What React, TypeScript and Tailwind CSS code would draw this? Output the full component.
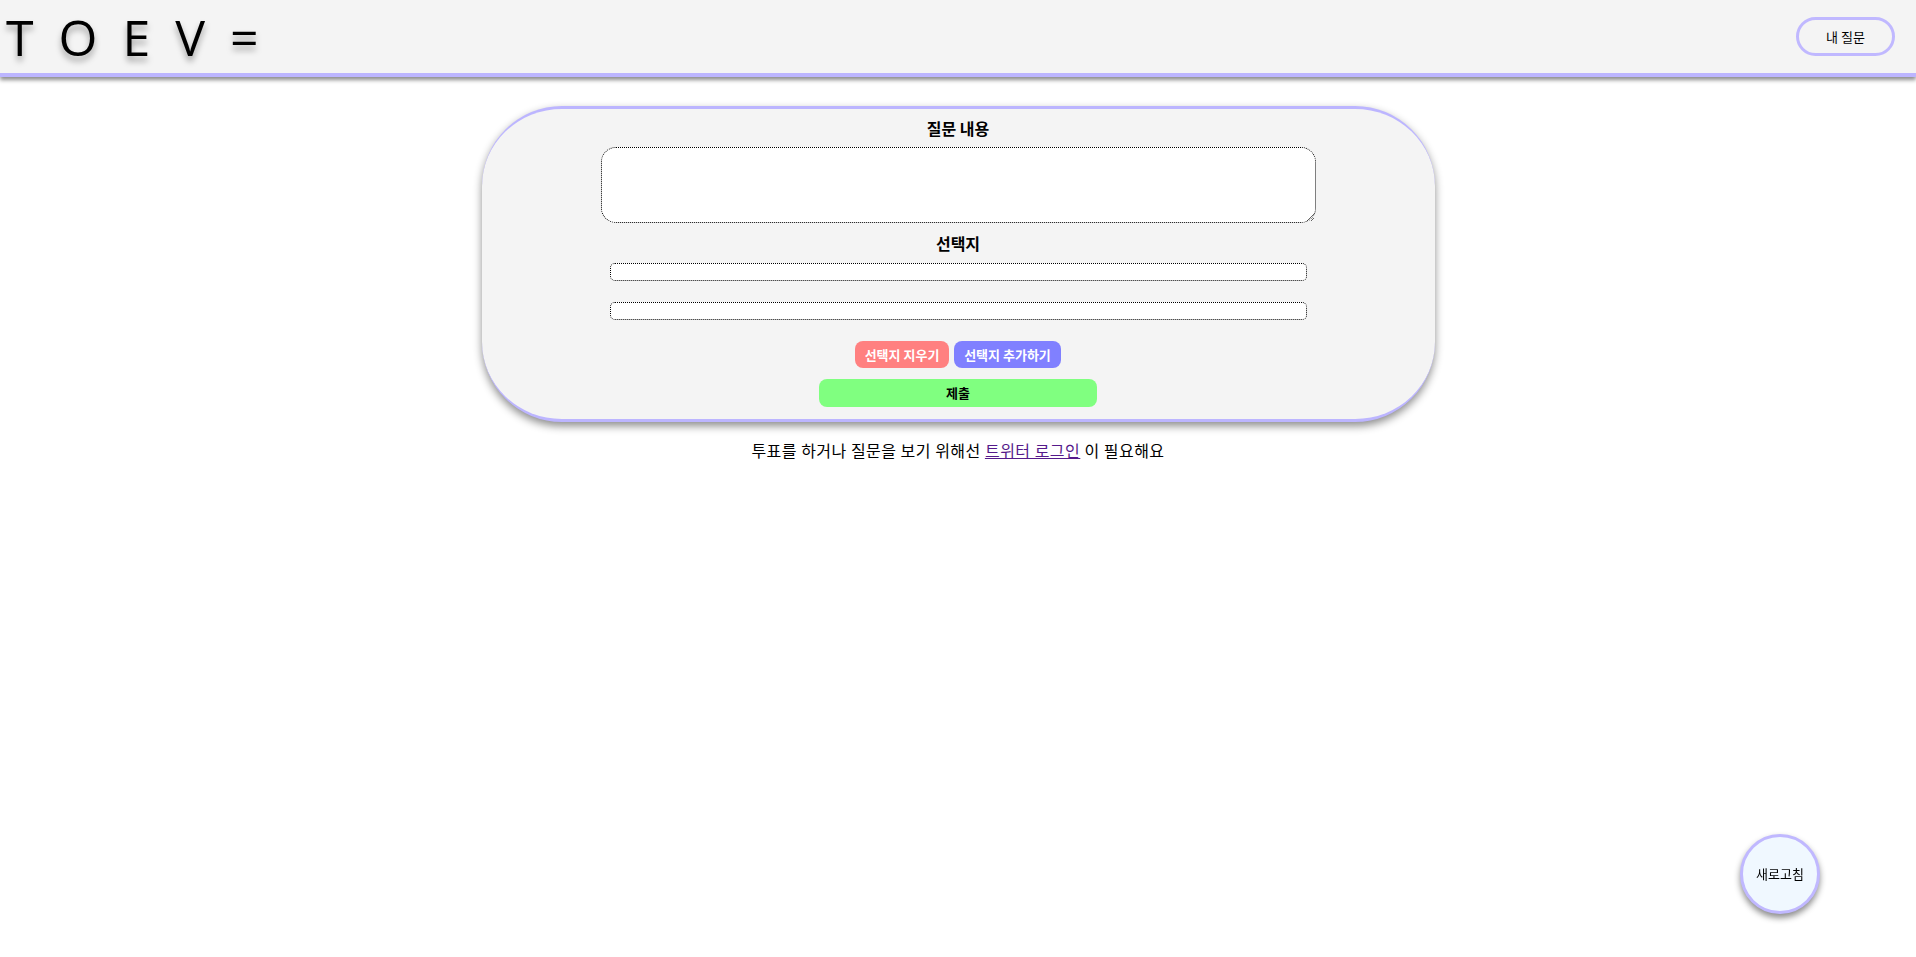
const App = () => {
  return (
    <div className="min-h-screen bg-white text-black" style={{ fontFamily: '"Noto Sans CJK KR", "Open Sans", sans-serif' }}>
      <header className="relative z-10 flex h-[77px] items-center justify-between border-b-4 border-[#bcb5ff] bg-[#f4f4f4] shadow-[0_3px_4px_rgba(0,0,0,0.45)]">
        <h1
          className="pl-[6px] text-[50px] leading-none tracking-[6px] [text-shadow:0_5px_6px_rgba(0,0,0,0.35)]"
          style={{ fontFamily: '"Open Sans", sans-serif' }}
        >
          T O E V =
        </h1>
        <button className="mr-[21px] h-[39px] w-[99px] rounded-full border-[3px] border-[#c0b8ff] text-[13px]">
          내 질문
        </button>
      </header>

      <main className="flex flex-col items-center pt-[29px]">
        <section className="w-[953px] rounded-[80px] border-y-[3px] border-[#bcb5ff] bg-[#f4f4f4] pb-[12px] pt-[7px] shadow-[0_4px_8px_rgba(0,0,0,0.45)]">
          <div className="flex flex-col items-center">
            <label className="text-[16px] font-bold leading-[24px]">질문 내용</label>
            <textarea className="mt-[7px] h-[76px] w-[715px] resize-y rounded-[15px] border border-dotted border-black bg-white" />
            <label className="mt-[8px] text-[16px] font-bold leading-[24px]">선택지</label>
            <input className="mt-[8px] h-[18px] w-[697px] rounded-[5px] border border-dotted border-black bg-white" />
            <input className="mt-[21px] h-[18px] w-[697px] rounded-[5px] border border-dotted border-black bg-white" />
            <div className="mt-[21px] flex gap-[5px]">
              <button className="h-[27px] w-[94px] rounded-[8px] bg-[#ff8080] text-[13px] font-bold text-white">
                선택지 지우기
              </button>
              <button className="h-[27px] w-[107px] rounded-[8px] bg-[#8080ff] text-[13px] font-bold text-white">
                선택지 추가하기
              </button>
            </div>
            <button className="mt-[11px] h-[28px] w-[278px] rounded-[8px] bg-[#80ff80] text-[13px] font-bold">
              제출
            </button>
          </div>
        </section>

        <p className="mt-[16px] text-[16px] leading-[24px] tracking-[0.5px]">
          투표를 하거나 질문을 보기 위해선{' '}
          <a href="#" className="text-[#551a8b] underline">
            트위터 로그인
          </a>{' '}
          이 필요해요
        </p>
      </main>

      <button className="fixed bottom-[43px] right-[96px] flex h-[80px] w-[80px] items-center justify-center rounded-full border-[3px] border-[#c0b8ff] bg-[#f0f8ff] text-[13px] shadow-[0_4px_6px_rgba(0,0,0,0.45)]">
        새로고침
      </button>
    </div>
  );
};

export default App;
